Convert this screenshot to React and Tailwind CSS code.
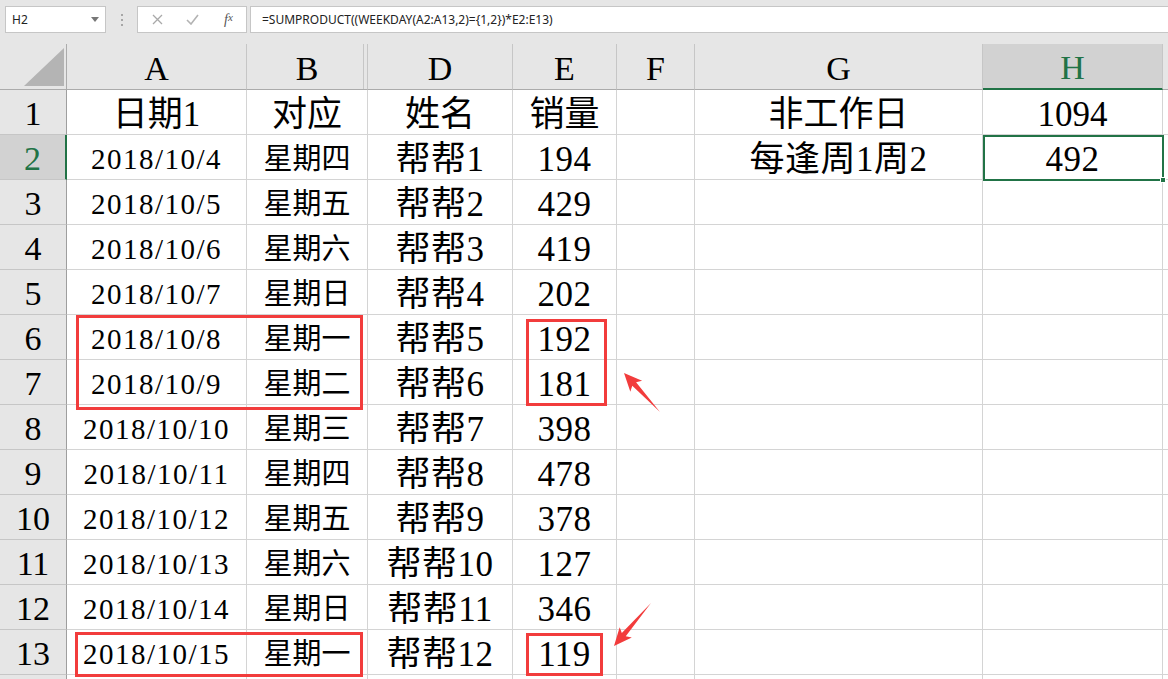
import React from 'react';

const rows = [
  ['日期1', '对应', '姓名', '销量', '', '非工作日', '1094'],
  ['2018/10/4', '星期四', '帮帮1', '194', '', '每逢周1周2', '492'],
  ['2018/10/5', '星期五', '帮帮2', '429', '', '', ''],
  ['2018/10/6', '星期六', '帮帮3', '419', '', '', ''],
  ['2018/10/7', '星期日', '帮帮4', '202', '', '', ''],
  ['2018/10/8', '星期一', '帮帮5', '192', '', '', ''],
  ['2018/10/9', '星期二', '帮帮6', '181', '', '', ''],
  ['2018/10/10', '星期三', '帮帮7', '398', '', '', ''],
  ['2018/10/11', '星期四', '帮帮8', '478', '', '', ''],
  ['2018/10/12', '星期五', '帮帮9', '378', '', '', ''],
  ['2018/10/13', '星期六', '帮帮10', '127', '', '', ''],
  ['2018/10/14', '星期日', '帮帮11', '346', '', '', ''],
  ['2018/10/15', '星期一', '帮帮12', '119', '', '', ''],
  ['', '', '', '', '', '', ''],
];

const formula = '=SUMPRODUCT((WEEKDAY(A2:A13,2)={1,2})*E2:E13)';

// arrow polygon: pointed tail, widening shaft, flared head
function arrowPoints(tx, ty, hx, hy) {
  const dx = hx - tx;
  const dy = hy - ty;
  const L = Math.hypot(dx, dy);
  const ux = dx / L;
  const uy = dy / L;
  const nx = -uy;
  const ny = ux;
  const pt = (a, b) => `${tx + ux * a + nx * b},${ty + uy * a + ny * b}`;
  return [pt(0, 0), pt(L - 15, -2.6), pt(L - 18, -8), pt(L, 0), pt(L - 18, 8), pt(L - 15, 2.6)].join(' ');
}

function cellClass(ci, ri) {
  if (ri === 0) return 'text-[35px]';
  if (ci === 0) return 'text-[29px] tracking-[1.5px]';
  if (ci === 1) return 'text-[29px]';
  return 'text-[35px] tracking-[0.5px]';
}

const Toolbar = () => (
  <div className="flex h-[44px] items-start bg-[#e6e6e6] pl-[5px] pt-[6px]">
    <div className="flex h-[27px] w-[101px] items-center justify-between border border-[#c6c6c6] bg-white pl-[6px] pr-[6px] font-['Noto_Sans','Liberation_Sans',sans-serif] text-[12px] text-[#222]">
      <span>H2</span>
      <svg width="8" height="5" viewBox="0 0 8 5"><path d="M0 0h8L4 5z" fill="#777" /></svg>
    </div>
    <div className="flex h-[27px] w-[31px] flex-col items-center justify-center gap-[3px]">
      <span className="h-[2px] w-[2px] bg-[#a6a6a6]" />
      <span className="h-[2px] w-[2px] bg-[#a6a6a6]" />
      <span className="h-[2px] w-[2px] bg-[#a6a6a6]" />
    </div>
    <div className="flex h-[27px] w-[110px] items-center border border-[#c6c6c6] bg-white">
      <div className="flex w-[36px] justify-center pl-[2px]">
        <svg width="11" height="11" viewBox="0 0 11 11"><path d="M1 1l9 9M10 1l-9 9" stroke="#a9a9a9" strokeWidth="1.3" /></svg>
      </div>
      <div className="flex w-[37px] justify-center">
        <svg width="13" height="11" viewBox="0 0 13 11"><path d="M1 6l4 4 7-9" stroke="#b3b3b3" strokeWidth="1.6" fill="none" /></svg>
      </div>
      <div className="flex w-[35px] justify-center font-['Liberation_Serif',serif] text-[14px] italic text-[#555]">
        f<span className="text-[11px]">x</span>
      </div>
    </div>
    <div className="ml-[3px] flex h-[27px] flex-1 items-center border-y border-l border-[#c6c6c6] bg-white pl-[11px] font-['Noto_Sans','Liberation_Sans',sans-serif] text-[12px] text-[#222]">
      {formula}
    </div>
  </div>
);

const App = () => {
  const letters = ['A', 'B', 'D', 'E', 'F', 'G', 'H'];
  return (
    <div className="relative h-[679px] w-[1168px] overflow-hidden bg-white">
      <Toolbar />
      <div className="grid grid-cols-[67px_180px_121px_145px_104px_78px_288px_180px_1fr] font-['Liberation_Serif','Noto_Sans_CJK_SC',serif] text-black">
        {/* header row */}
        <div className="relative h-[46px] border-b border-r border-[#ababab] bg-[#e6e6e6]">
          <svg className="absolute left-[24px] top-[4px]" width="40" height="38" viewBox="0 0 40 38">
            <path d="M40 0V38H0z" fill="#b4b4b4" />
          </svg>
        </div>
        {letters.map((l) => (
          <div
            key={l}
            className={
              l === 'H'
                ? 'flex h-[46px] items-center justify-center border-b-2 border-r border-b-[#217346] border-r-[#c6c6c6] bg-[#d2d2d2] pt-[3px] text-[34px] text-[#217346]'
                : l === 'B'
                ? 'flex h-[46px] items-center justify-center border-b border-r border-b-[#ababab] border-r-[#c6c6c6] bg-[#e6e6e6] pt-[3px] text-[34px] shadow-[inset_-3px_0_0_#e6e6e6,inset_-4px_0_0_#c6c6c6]'
                : 'flex h-[46px] items-center justify-center border-b border-r border-b-[#ababab] border-r-[#c6c6c6] bg-[#e6e6e6] pt-[3px] text-[34px]'
            }
          >
            {l}
          </div>
        ))}
        <div className="h-[46px] border-b border-[#ababab] bg-[#e6e6e6]" />

        {rows.map((r, ri) => (
          <React.Fragment key={ri}>
            <div
              className={
                ri === 1
                  ? 'flex h-[45px] items-center justify-center border-b border-r-2 border-b-[#c6c6c6] border-r-[#217346] bg-[#d2d2d2] pt-[4px] text-[34px] leading-none text-[#217346]'
                  : 'flex h-[45px] items-center justify-center border-b border-r border-b-[#c6c6c6] border-r-[#9e9e9e] bg-[#e6e6e6] pt-[4px] text-[34px] leading-none'
              }
            >
              {ri < 13 ? ri + 1 : ''}
            </div>
            {r.map((v, ci) => (
              <div
                key={ci}
                className={`flex h-[45px] items-center justify-center whitespace-nowrap border-b border-r border-[#d4d4d4] pt-[5px] leading-none ${cellClass(ci, ri)}`}
              >
                {v}
              </div>
            ))}
            <div className="h-[45px] border-b border-[#d4d4d4]" />
          </React.Fragment>
        ))}
      </div>

      {/* selection of H2 */}
      <div className="absolute left-[983px] top-[135px] h-[46px] w-[181px] border-2 border-[#217346]" />
      <div className="absolute left-[1160px] top-[177px] h-[6px] w-[6px] border border-white bg-[#217346]" />

      {/* red annotation boxes */}
      <div className="absolute left-[76px] top-[315px] h-[95px] w-[287px] border-[3px] border-[#f23c3c]" />
      <div className="absolute left-[526px] top-[319px] h-[87px] w-[81px] border-[3px] border-[#f23c3c]" />
      <div className="absolute left-[75px] top-[632px] h-[45px] w-[288px] border-[3px] border-[#f23c3c]" />
      <div className="absolute left-[526px] top-[633px] h-[43px] w-[77px] border-[3px] border-[#f23c3c]" />

      <svg className="pointer-events-none absolute left-0 top-0" width="1168" height="679">
        <polygon points={arrowPoints(660, 412, 624, 373)} fill="#f23c3c" />
        <polygon points={arrowPoints(651, 603, 614, 646)} fill="#f23c3c" />
      </svg>
    </div>
  );
};

export default App;
